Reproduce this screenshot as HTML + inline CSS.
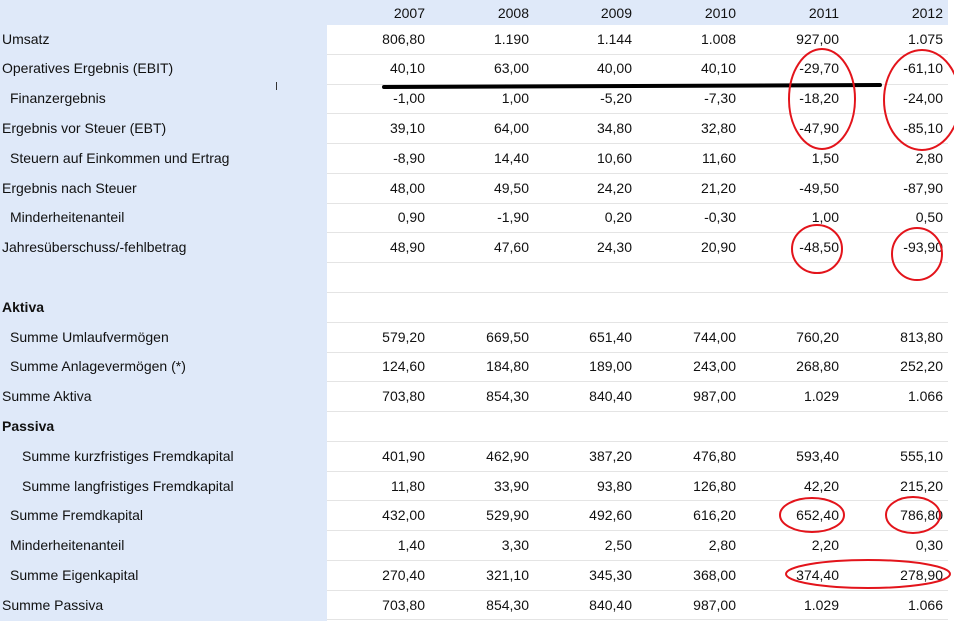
<!DOCTYPE html>
<html><head><meta charset="utf-8">
<style>
*{margin:0;padding:0;box-sizing:border-box}
body{width:954px;height:621px;background:#fff;font-family:"Liberation Sans",Arial,sans-serif;font-size:14px;color:#111;position:relative;overflow:hidden}
.hdr{position:absolute;left:0;top:0;width:948px;height:25px;background:#dfe9f9}
.lab{position:absolute;left:0;top:0;width:327px;height:621px;background:#dfe9f9}
.row{position:absolute;left:0;width:948px;height:29.8px}
.row .l{position:absolute;top:6px;white-space:nowrap}
.row .v{position:absolute;top:6px;width:100px;text-align:right}
.line{position:absolute;left:327px;width:621px;height:1px;background:#e4e4e4}
b{font-weight:bold}
</style></head><body>
<div class="hdr"></div>
<div class="lab"></div>
<div id="c"></div>
<div class="row" style="top:-1px">
<span class="v" style="left:325px">2007</span><span class="v" style="left:429px">2008</span><span class="v" style="left:532px">2009</span><span class="v" style="left:636px">2010</span><span class="v" style="left:739px">2011</span><span class="v" style="left:843px">2012</span></div>

<div class="row" style="top:24.5px"><span class="l" style="left:2px">Umsatz</span><span class="v" style="left:325px">806,80</span><span class="v" style="left:429px">1.190</span><span class="v" style="left:532px">1.144</span><span class="v" style="left:636px">1.008</span><span class="v" style="left:739px">927,00</span><span class="v" style="left:843px">1.075</span></div>
<div class="row" style="top:54.3px"><span class="l" style="left:2px">Operatives Ergebnis (EBIT)</span><span class="v" style="left:325px">40,10</span><span class="v" style="left:429px">63,00</span><span class="v" style="left:532px">40,00</span><span class="v" style="left:636px">40,10</span><span class="v" style="left:739px">-29,70</span><span class="v" style="left:843px">-61,10</span></div>
<div class="row" style="top:84.1px"><span class="l" style="left:10px">Finanzergebnis</span><span class="v" style="left:325px">-1,00</span><span class="v" style="left:429px">1,00</span><span class="v" style="left:532px">-5,20</span><span class="v" style="left:636px">-7,30</span><span class="v" style="left:739px">-18,20</span><span class="v" style="left:843px">-24,00</span></div>
<div class="row" style="top:113.9px"><span class="l" style="left:2px">Ergebnis vor Steuer (EBT)</span><span class="v" style="left:325px">39,10</span><span class="v" style="left:429px">64,00</span><span class="v" style="left:532px">34,80</span><span class="v" style="left:636px">32,80</span><span class="v" style="left:739px">-47,90</span><span class="v" style="left:843px">-85,10</span></div>
<div class="row" style="top:143.7px"><span class="l" style="left:10px">Steuern auf Einkommen und Ertrag</span><span class="v" style="left:325px">-8,90</span><span class="v" style="left:429px">14,40</span><span class="v" style="left:532px">10,60</span><span class="v" style="left:636px">11,60</span><span class="v" style="left:739px">1,50</span><span class="v" style="left:843px">2,80</span></div>
<div class="row" style="top:173.5px"><span class="l" style="left:2px">Ergebnis nach Steuer</span><span class="v" style="left:325px">48,00</span><span class="v" style="left:429px">49,50</span><span class="v" style="left:532px">24,20</span><span class="v" style="left:636px">21,20</span><span class="v" style="left:739px">-49,50</span><span class="v" style="left:843px">-87,90</span></div>
<div class="row" style="top:203.3px"><span class="l" style="left:10px">Minderheitenanteil</span><span class="v" style="left:325px">0,90</span><span class="v" style="left:429px">-1,90</span><span class="v" style="left:532px">0,20</span><span class="v" style="left:636px">-0,30</span><span class="v" style="left:739px">1,00</span><span class="v" style="left:843px">0,50</span></div>
<div class="row" style="top:233.1px"><span class="l" style="left:2px">Jahresüberschuss/-fehlbetrag</span><span class="v" style="left:325px">48,90</span><span class="v" style="left:429px">47,60</span><span class="v" style="left:532px">24,30</span><span class="v" style="left:636px">20,90</span><span class="v" style="left:739px">-48,50</span><span class="v" style="left:843px">-93,90</span></div>
<div class="row" style="top:292.7px"><span class="l" style="left:2px"><b>Aktiva</b></span></div>
<div class="row" style="top:322.5px"><span class="l" style="left:10px">Summe Umlaufvermögen</span><span class="v" style="left:325px">579,20</span><span class="v" style="left:429px">669,50</span><span class="v" style="left:532px">651,40</span><span class="v" style="left:636px">744,00</span><span class="v" style="left:739px">760,20</span><span class="v" style="left:843px">813,80</span></div>
<div class="row" style="top:352.3px"><span class="l" style="left:10px">Summe Anlagevermögen (*)</span><span class="v" style="left:325px">124,60</span><span class="v" style="left:429px">184,80</span><span class="v" style="left:532px">189,00</span><span class="v" style="left:636px">243,00</span><span class="v" style="left:739px">268,80</span><span class="v" style="left:843px">252,20</span></div>
<div class="row" style="top:382.1px"><span class="l" style="left:2px">Summe Aktiva</span><span class="v" style="left:325px">703,80</span><span class="v" style="left:429px">854,30</span><span class="v" style="left:532px">840,40</span><span class="v" style="left:636px">987,00</span><span class="v" style="left:739px">1.029</span><span class="v" style="left:843px">1.066</span></div>
<div class="row" style="top:411.9px"><span class="l" style="left:2px"><b>Passiva</b></span></div>
<div class="row" style="top:441.7px"><span class="l" style="left:22px">Summe kurzfristiges Fremdkapital</span><span class="v" style="left:325px">401,90</span><span class="v" style="left:429px">462,90</span><span class="v" style="left:532px">387,20</span><span class="v" style="left:636px">476,80</span><span class="v" style="left:739px">593,40</span><span class="v" style="left:843px">555,10</span></div>
<div class="row" style="top:471.5px"><span class="l" style="left:22px">Summe langfristiges Fremdkapital</span><span class="v" style="left:325px">11,80</span><span class="v" style="left:429px">33,90</span><span class="v" style="left:532px">93,80</span><span class="v" style="left:636px">126,80</span><span class="v" style="left:739px">42,20</span><span class="v" style="left:843px">215,20</span></div>
<div class="row" style="top:501.3px"><span class="l" style="left:10px">Summe Fremdkapital</span><span class="v" style="left:325px">432,00</span><span class="v" style="left:429px">529,90</span><span class="v" style="left:532px">492,60</span><span class="v" style="left:636px">616,20</span><span class="v" style="left:739px">652,40</span><span class="v" style="left:843px">786,80</span></div>
<div class="row" style="top:531.1px"><span class="l" style="left:10px">Minderheitenanteil</span><span class="v" style="left:325px">1,40</span><span class="v" style="left:429px">3,30</span><span class="v" style="left:532px">2,50</span><span class="v" style="left:636px">2,80</span><span class="v" style="left:739px">2,20</span><span class="v" style="left:843px">0,30</span></div>
<div class="row" style="top:560.9px"><span class="l" style="left:10px">Summe Eigenkapital</span><span class="v" style="left:325px">270,40</span><span class="v" style="left:429px">321,10</span><span class="v" style="left:532px">345,30</span><span class="v" style="left:636px">368,00</span><span class="v" style="left:739px">374,40</span><span class="v" style="left:843px">278,90</span></div>
<div class="row" style="top:590.7px"><span class="l" style="left:2px">Summe Passiva</span><span class="v" style="left:325px">703,80</span><span class="v" style="left:429px">854,30</span><span class="v" style="left:532px">840,40</span><span class="v" style="left:636px">987,00</span><span class="v" style="left:739px">1.029</span><span class="v" style="left:843px">1.066</span></div>

<div class="line" style="top:54px"></div><div class="line" style="top:84px"></div><div class="line" style="top:113px"></div><div class="line" style="top:143px"></div><div class="line" style="top:173px"></div><div class="line" style="top:203px"></div><div class="line" style="top:232px"></div><div class="line" style="top:262px"></div><div class="line" style="top:292px"></div><div class="line" style="top:322px"></div><div class="line" style="top:352px"></div><div class="line" style="top:381px"></div><div class="line" style="top:411px"></div><div class="line" style="top:441px"></div><div class="line" style="top:471px"></div><div class="line" style="top:500px"></div><div class="line" style="top:530px"></div><div class="line" style="top:560px"></div><div class="line" style="top:590px"></div><div class="line" style="top:619px"></div>

<div style="position:absolute;left:276px;top:82px;width:1px;height:8px;background:#333"></div>
<svg width="954" height="621" style="position:absolute;left:0;top:0">
<line x1="384" y1="87" x2="880" y2="85" stroke="#000" stroke-width="4" stroke-linecap="round"/>
<g fill="none" stroke="#e3141b" stroke-width="2">
<ellipse cx="822" cy="99" rx="33" ry="50"/>
<ellipse cx="922" cy="100" rx="38" ry="50"/>
<ellipse cx="817" cy="249" rx="25" ry="24"/>
<ellipse cx="917" cy="254" rx="25" ry="26"/>
<ellipse cx="812" cy="515" rx="32" ry="17"/>
<ellipse cx="913" cy="515" rx="27" ry="18"/>
<ellipse cx="868" cy="574" rx="82" ry="14"/>
</g>
</svg>
</body></html>
